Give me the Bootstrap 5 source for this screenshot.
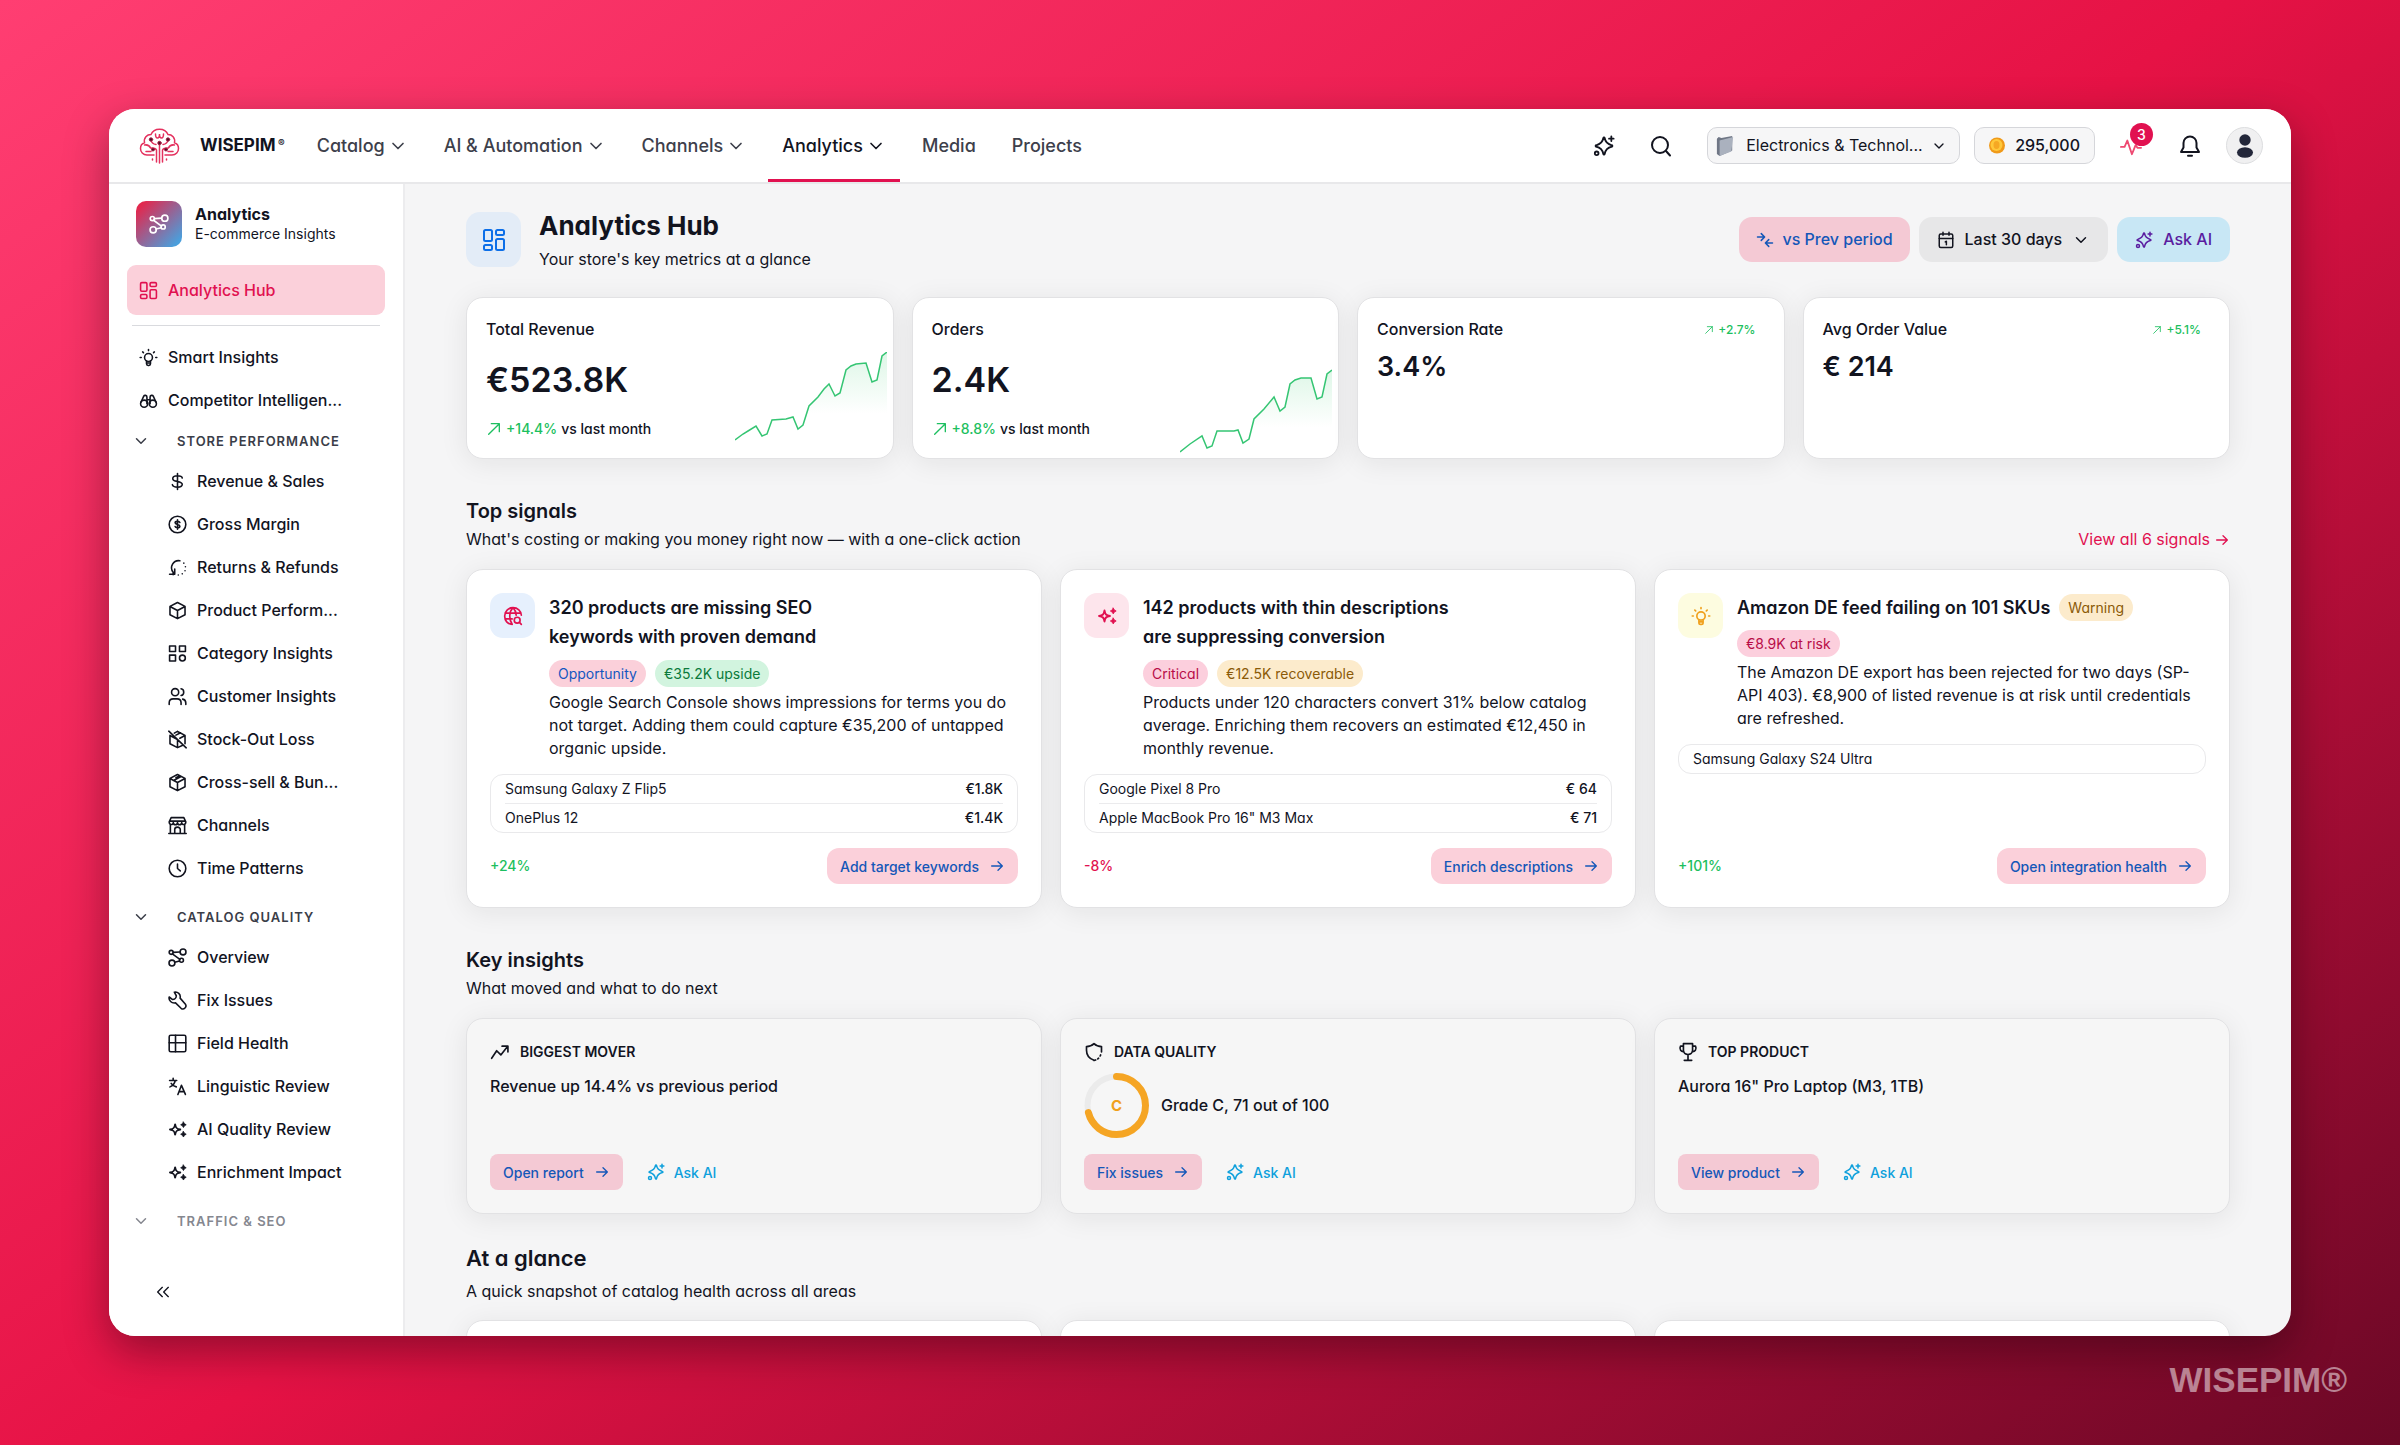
<!DOCTYPE html>
<html lang="en">
<head>
<meta charset="utf-8">
<meta name="viewport" content="width=device-width, initial-scale=1">
<title>WISEPIM Analytics Hub</title>
<link href="https://cdn.jsdelivr.net/npm/bootstrap@5.3.0/dist/css/bootstrap.min.css" rel="stylesheet">
<style>
:root{--ink:#12141f;--pink:#e11150;--blush:#fbd0da;--blue:#1457b8;--green:#1dbf60;--line:#e8e8ea}
body{font-family:Inter,"Noto Sans",sans-serif;font-feature-settings:"cv11";font-size:16px;line-height:23px;color:var(--ink);
 background:linear-gradient(145deg,#ff3e72 0%,#e61245 50%,#6b0826 100%);min-height:100vh}
a{text-decoration:none}
button{font-family:inherit}
h1,h2,h3,h4,p,ul{margin:0}
svg.ico{fill:none;stroke:currentColor;stroke-width:2;stroke-linecap:round;stroke-linejoin:round;flex:none;width:18px;height:18px}
svg.s10{width:10px;height:10px}
svg.s16{width:16px;height:16px}
svg.s20{width:20px;height:20px}
svg.s22{width:22px;height:22px}
svg.s24{width:24px;height:24px}
.stage{padding:109px 109px 0}
.shell{height:calc(100vh - 218px);min-height:600px;background:#f5f5f6;border-radius:26px;overflow:hidden;box-shadow:0 16px 44px rgba(30,0,12,.42)}
.topbar{height:75px;background:#fff;border-bottom:2px solid var(--line);padding:0 28px 0 30px;flex:none}
.brandname{font-weight:700;font-size:17px}
.brandname sup{font-size:10px;top:-4px;font-weight:600}
.mainnav{gap:8px;align-self:stretch;margin-left:18px}
.mainnav a{color:#3d404b;font-size:18px;font-weight:500;padding:0 14px;display:flex;align-items:center;gap:3px;border-bottom:3px solid transparent;border-top:3px solid transparent}
.mainnav a.on{color:var(--ink);border-bottom-color:var(--pink)}
.quick{gap:34px;margin-right:34px}
.iconbtn{background:none;border:0;padding:0;color:var(--ink);display:flex}
.pill{height:37px;border:1px solid #d5d6da;border-radius:10px;background:#f6f6f7;display:flex;align-items:center;gap:8px;padding:0 8px;margin-right:14px}
.pill select{appearance:none;border:0;background:none;color:var(--ink);font:inherit;font-size:16px;padding:0;outline:0}
.credits{padding:0 14px;gap:10px;font-weight:500;margin-right:25px}
.pulse{color:#ee4a72;margin-right:36px}
.alerts{margin-right:24px}
.count{position:absolute;top:-23px;left:10px;width:23px;height:23px;border-radius:50%;background:var(--pink);color:#fff;font-size:14px;font-weight:500;text-align:center}
.avatar{width:37px;height:37px;border-radius:50%;background:#f0f0f1;border:1px solid #dddee0}
.side{width:296px;flex:none;background:#fff;border-right:2px solid #ececee;padding:17px 18px 20px}
.sidehead{padding:0 9px;gap:13px;margin-bottom:18px}
.appicon{width:46px;height:46px;border-radius:10px;background:linear-gradient(135deg,#e2284e 10%,#4a9fdc 90%);color:#fff;flex:none}
.sidehead h2{font-size:16px;line-height:20px;font-weight:700}
.sidehead p{font-size:14px;line-height:20px}
.side a{display:flex;align-items:center;height:43px;gap:10px;padding-left:12px;color:var(--ink);font-weight:500}
.side a .ico{width:19px;height:19px}
.side a.on{height:50px;background:var(--blush);color:var(--pink);border-radius:9px}
.side hr{margin:10px 5px;color:#c9cbd0;opacity:.7}
.side ul{list-style:none;padding:0 0 0 29px}
.grp{height:38px;padding:0 0 0 5px;border:0;background:none;display:flex;align-items:center;gap:27px;width:100%;color:#3a3d48;font-size:13px;font-weight:600;letter-spacing:1px}
.grp.next{margin-top:8px}
.grp.dim{color:#85878f}
.page{padding:24px 61px 0;flex:1;min-width:0;overflow:hidden}
.hubicon{width:55px;height:55px;border-radius:14px;background:#e3ecf7;color:#0d6fe8}
.hubtitle{margin-left:18px}
.page h1{font-size:26px;line-height:36px;font-weight:700}
.tool{height:45px;border:0;border-radius:13px;display:flex;align-items:center;gap:10px;padding:0 18px;font-weight:500;font-size:16px}
.t-pink{background:#f4c9d4;color:var(--blue);padding:0 17px;gap:9px}
.t-gray{background:#e7e7e8;color:var(--ink)}
.t-sky{background:#c8e7f5;color:#5a1da0}
.kpis{display:grid;grid-template-columns:repeat(4,1fr);gap:18px;margin-top:26px}
.tri{display:grid;grid-template-columns:repeat(3,1fr);gap:18px}
.panel{background:#fff;border:1px solid #e2e2e4;border-radius:17px;box-shadow:0 4px 28px rgba(20,20,30,.08)}
.kpi{height:162px;padding-left:19px}
.kpi h3{font-size:16px;line-height:23px;font-weight:500}
.big{font-size:34px;line-height:42px;font-weight:600;margin:18px 0}
.mid{font-size:27px;line-height:36px;font-weight:600}
.delta{font-size:14px;line-height:20px;font-weight:500}
.tiny{font-size:12px;line-height:20px;font-weight:500;margin-right:28px}
.green{color:var(--green)}
.red{color:var(--pink)}
.spark{width:152px;height:101px;margin:0 6px 5px 0;flex:none;align-self:flex-end}
.sect{margin:39px 0 18px}
.sect h2{font-size:20px;line-height:26px;font-weight:600;margin-bottom:4px}
.signal{padding:23px;display:flex;flex-direction:column;min-height:339px}
.lead-in{gap:14px}
.tile{width:45px;height:45px;border-radius:13px;flex:none;display:flex;align-items:center;justify-content:center}
.tile-seo{background:#e6f0fd;color:var(--pink)}
.tile-ai{background:#fde5ec;color:var(--pink)}
.tile-warn{background:#fdfce0;color:#f0a01c}
.signal h3{font-size:18px;line-height:29px;font-weight:600}
.tags{gap:9px}
.tag{font-size:14px;line-height:27px;border-radius:14px;padding:0 9px}
.g-blue{background:#fbd0da;color:#1457c0}.g-green{background:#d2f4df;color:#0b7a3b}.g-crit{background:#fccfdd;color:#b80d48}.g-amber{background:#fcebcc;color:#8a5a08}
.items{list-style:none;border:1px solid #e9e9eb;border-radius:13px;padding:0 14px;margin-top:14px;font-size:14px}
.items li{display:flex;justify-content:space-between;line-height:28px}
.items li+li{border-top:1px solid #ebebed}
.items b{font-weight:500}
.act{height:36px;border:0;border-radius:12px;background:var(--blush);color:var(--blue);font-size:14px;font-weight:500;display:flex;align-items:center;gap:10px;padding:0 13px}
.act.sq{border-radius:8px;background:#f4c9d4}
.insight{background:#f6f6f6;padding:23px;height:196px;display:flex;flex-direction:column}
.insight p,.grade{font-weight:500}
.insight p{padding-top:13px}
.cap{font-size:14px;line-height:20px;font-weight:600;gap:10px}
.grade{gap:12px;margin-top:11px}
.ask{border:0;background:none;color:#0ea0dc;font-size:14px;font-weight:500;display:flex;align-items:center;gap:9px;padding:0}
.glance{margin:29px 0 17px}
.glance h2{font-size:22px;line-height:30px;font-weight:600;margin-bottom:7px}
.mark-foot{font-family:"Liberation Sans",sans-serif;font-weight:700;font-size:35px;line-height:40px;color:rgba(255,255,255,.5);padding:24px 53px 0 0;text-align:right}
</style>
<script src="https://cdn.jsdelivr.net/npm/bootstrap@5.3.0/dist/js/bootstrap.bundle.min.js"></script>
</head>
<body>
<svg width="0" height="0" class="d-none" aria-hidden="true">
<symbol id="chev" viewBox="0 0 24 24"><path d="M6 9l6 6 6-6"/></symbol>
<symbol id="dash" viewBox="0 0 24 24"><rect x="2" y="2" width="8" height="11" rx="1.5"/><rect x="2" y="17" width="8" height="5" rx="1.5"/><rect x="14" y="2" width="8" height="5" rx="1.5"/><rect x="14" y="11" width="8" height="11" rx="1.5"/></symbol>
<symbol id="spark" viewBox="0 0 24 24"><path d="M12 2.500c.4 0 .6.300.7.800.8 4.400 2.600 6.600 7.800 7.900.9.200.9 1.400 0 1.600-5.200 1.300-7 3.500-7.800 7.900-.2 1-1.200 1-1.400 0-.8-4.400-2.600-6.600-7.800-7.900-.9-.2-.9-1.400 0-1.600 5.200-1.300 7-3.500 7.800-7.900.1-.5.300-.8.700-.8z"/><path d="M20 1.500v5M17.500 4h5"/><circle cx="4" cy="20" r="2"/></symbol>
<symbol id="stars" viewBox="0 0 24 24"><path d="M9 5.500c.7 4.500 2 5.800 6.500 6.500-4.500.7-5.800 2-6.500 6.500-.7-4.500-2-5.800-6.500-6.500 4.500-.7 5.800-2 6.500-6.500z" stroke-width="2.400"/><path d="M19.500 2.500l1.300 2.200L23 6l-2.200 1.300-1.300 2.200-1.300-2.200L16 6l2.200-1.300zM19.500 14.500l1.300 2.200L23 18l-2.200 1.300-1.300 2.200-1.300-2.200L16 18l2.200-1.300z" fill="currentColor" stroke-width="1"/></symbol>
<symbol id="search" viewBox="0 0 24 24"><circle cx="11" cy="11" r="8"/><path d="M17 17l4 4.500"/></symbol>
<symbol id="bell" viewBox="0 0 24 24"><path d="M12 2.500a6.500 6.500 0 0 0-6.500 6.500v4.500L3 18h18l-2.500-4.500V9A6.500 6.500 0 0 0 12 2.500zM10 21.800h4"/></symbol>
<symbol id="bulb" viewBox="0 0 24 24"><circle cx="12" cy="12" r="5"/><path d="M9.500 16.500v3.500a2 2 0 0 0 2 2h1a2 2 0 0 0 2-2v-3.500M9.800 19h4.400M12 2v1.300M1.500 12h1.300M21.200 12h1.300M4.600 5l1 .9M19.400 5l-1 .9"/></symbol>
<symbol id="bino" viewBox="0 0 24 24"><circle cx="6.500" cy="16" r="4.500"/><circle cx="17.500" cy="16" r="4.500"/><path d="M2.300 14.500L6 6.500c.8-1.600 4-1.300 4 1V16M21.700 14.500L18 6.500c-.8-1.600-4-1.300-4 1V16M10 11h4"/></symbol>
<symbol id="dollar" viewBox="0 0 24 24"><path d="M12 2v20M18 7.500C17.500 5.500 15 4.800 12 4.800c-3.500 0-6 1.200-6 3.600 0 5 12 2 12 7.200 0 2.400-2.500 3.600-6 3.600s-6-1-6.500-3.200"/></symbol>
<symbol id="coinc" viewBox="0 0 24 24"><circle cx="12" cy="12" r="10.500"/><path d="M12 6v12M15 9.500c-.4-1-1.500-1.500-3-1.500-1.800 0-3 .7-3 1.900 0 2.700 6 1.500 6 4.200 0 1.200-1.200 1.900-3 1.900-1.600 0-2.700-.5-3-1.500"/></symbol>
<symbol id="ret" viewBox="0 0 24 24"><path d="M15 3.500A9 9 0 0 0 6.500 18v3M2 20.500h6.500V14"/><path d="M20 6.500v.01M22 11v.01M21.500 16v.01M18 20v.01M13 21.500v.01"/></symbol>
<symbol id="box" viewBox="0 0 24 24"><path d="M12 1.800l9.500 5v10.500L12 22.300l-9.500-5V6.800zM2.500 7l9.500 5 9.500-5M12 12v10"/></symbol>
<symbol id="box2" viewBox="0 0 24 24"><path d="M12 1.800l9.500 5v10.500L12 22.300l-9.500-5V6.800zM2.500 7l9.500 5 9.500-5M12 12v10M7 9.500l9.500-5M10 6l5-2.500"/></symbol>
<symbol id="boxoff" viewBox="0 0 24 24"><path d="M12 1.800l9.500 5v10.500M18 19.500l-6 2.800-9.500-5V6.800M8 4l4-2.200M15 10.500L21.500 7M12 12v10M10 6.500l6-3M1 1.500l22 21M2.500 7l9.500 5"/></symbol>
<symbol id="cats" viewBox="0 0 24 24"><rect x="2" y="2.500" width="7.500" height="7"/><rect x="14.500" y="2.500" width="7.500" height="7"/><rect x="2" y="14" width="7.500" height="7.500"/><circle cx="18.200" cy="17.800" r="3.700"/></symbol>
<symbol id="users" viewBox="0 0 24 24"><circle cx="9" cy="6.500" r="4.500"/><path d="M1.500 22v-2c0-3 2-5 5-5h5c3 0 5 2 5 5v2M16.500 2.300c4.500.7 4.500 7.700 0 8.400M18.500 15.300c2.600.6 4 2.300 4 5V22"/></symbol>
<symbol id="shop" viewBox="0 0 24 24"><path d="M1 22h22M3 11v11M21 11v11M4 2h16l2.500 5.500c0 4-5 4.500-5.200.8-.3 3.700-5 3.700-5.300 0-.3 3.700-5 3.700-5.300 0C6.500 12 1.500 11.500 1.500 7.500zM2 6.500h20M8.500 22v-5a3.500 3 0 0 1 7 0v5"/></symbol>
<symbol id="clock" viewBox="0 0 24 24"><circle cx="12" cy="12" r="10.500"/><path d="M12 6.500V12l3.500 3"/></symbol>
<symbol id="nodes" viewBox="0 0 24 24"><circle cx="4" cy="5.500" r="2.500"/><circle cx="19" cy="5" r="3.700"/><circle cx="17" cy="15.500" r="2.500"/><circle cx="5" cy="19" r="3.700"/><path d="M6.500 5.500L15 5M5.500 7.500l9.500 7M8.500 18l6-1.500"/></symbol>
<symbol id="wrench" viewBox="0 0 24 24"><path d="M8 1.500c4-1 8.500 2.500 7.300 7.500l6.500 7.500c2.700 3.500-1.800 8-5.300 5.300L9.500 15C4.500 16 .5 12 1.500 7.500l4.300 3.300c2.500 0 4.700-2 4.700-4.800z"/></symbol>
<symbol id="table" viewBox="0 0 24 24"><rect x="1.500" y="1.500" width="21" height="21" rx="2"/><path d="M1.500 11h21M9.500 1.500v21"/></symbol>
<symbol id="lang" viewBox="0 0 24 24"><path d="M2 4.500h9M6.500 1.500v3M9 5c-1 4-3 6-6.500 7.500M4 8c1.500 2.500 4 4 6.500 4.500M12.500 22l4.500-11.500L22 22M14 18.500h6.500"/></symbol>
<symbol id="dbl" viewBox="0 0 24 24"><path d="M11 5l-7 7 7 7M20 5l-7 7 7 7"/></symbol>
<symbol id="cmp" viewBox="0 0 24 24"><path d="M2 8h9M7 3.500l4.500 4.500L7 12.500M22 16h-9M17 11.500L12.500 16l4.500 4.500"/></symbol>
<symbol id="cal" viewBox="0 0 24 24"><rect x="3" y="4" width="18" height="18" rx="2"/><path d="M8 1.500v4M16 1.500v4M3 10h18M11 14.500l1.500-.8v4.500"/></symbol>
<symbol id="ne" viewBox="0 0 24 24"><path d="M4 20L20 4M8 4h12v12"/></symbol>
<symbol id="arr" viewBox="0 0 24 24"><path d="M4 12h16M13.500 5.500L20 12l-6.500 6.500"/></symbol>
<symbol id="globe" viewBox="0 0 24 24"><path d="M11 22C5.500 22 2 17.500 2 12S6.500 2 12 2s9.800 4 10 9M2.500 8.500h19M2.500 15.500H11M12 2c-5 5-5 14-1 20M12 2c2.500 2.500 3.600 5.500 3.800 9"/><circle cx="17" cy="17" r="3.500"/><path d="M19.700 19.700L22 22"/></symbol>
<symbol id="trend" viewBox="0 0 24 24"><path d="M2 19.500l6-9 5 5 8-10M14.500 5H21.500v7"/></symbol>
<symbol id="shield" viewBox="0 0 24 24"><path d="M12 22c-6-2-9-6-9-12V5.500c4 0 6.500-1 9-3.500 2.500 2.500 5 3.500 9 3.500V12M20 15.500l-.6 1.300M17.500 19.500l-1 .8M14 21.500l-2 .7"/></symbol>
<symbol id="cup" viewBox="0 0 24 24"><path d="M6.500 2h11v8c0 3-2.500 5-5.500 5s-5.500-2-5.500-5zM6.500 5H3c-2 4 1 7 4 6.500M17.500 5H21c2 4-1 7-4 6.500M12 15v6.500M7.500 22h9"/></symbol>
<symbol id="beat" viewBox="0 0 24 24"><path d="M1 13h4l3-7 5 15 4-10 2 3h4"/></symbol>
</svg>

<div class="stage">
<div class="shell d-flex flex-column">
<header class="topbar d-flex align-items-center">
  <svg width="41" height="36" viewBox="0 0 41 36" fill="none" stroke="#e4305e" stroke-width="1.500" stroke-linecap="round"><path d="M15 27H8c-4 0-6.500-3-6.500-6.500 0-3 1.700-5 4-5.700C4.500 9.500 8 6.500 12 6.500 13.500 3 17 1.300 20.500 1.300S27.500 3 29 6.500c4 0 7.500 3 6.500 8.300 2.300.7 4 2.700 4 5.700 0 3.500-2.500 6.500-6.500 6.500h-7"/><path d="M16.500 6c0 2 .3 4 2 4s2-2 2-4c0 2 .5 4 2 4s2-2 2-4"/><path d="M20.500 35V15M17.500 34V22c-1-2-3-2-5-2M23.500 34V22c1-2 3-2 5-2M12 12c.5 3 2 4 5 4.500M29 12c-.5 3-2 4-5 4.500M5.500 17c3-.5 5 .5 6 3M35.500 17c-3-.5-5 .5-6 3M7 23.500h5M34 23.500h-5M13.500 31v1M27.500 31v1"/><g fill="#4a1226" stroke="#a51a42" stroke-width="1"><circle cx="12" cy="11.500" r="1.700"/><circle cx="29" cy="11.500" r="1.700"/><circle cx="20.500" cy="15" r="1.700"/><circle cx="14" cy="21.500" r="1.500"/><circle cx="27" cy="21.500" r="1.500"/></g></svg>
  <a href="#" class="brandname text-reset ms-3 ps-1">WISEPIM<sup> ®</sup></a>
  <nav class="mainnav d-flex">
    <a href="#">Catalog <svg class="ico s20"><use href="#chev"/></svg></a>
    <a href="#">AI &amp; Automation <svg class="ico s20"><use href="#chev"/></svg></a>
    <a href="#">Channels <svg class="ico s20"><use href="#chev"/></svg></a>
    <a href="#" class="on">Analytics <svg class="ico s20"><use href="#chev"/></svg></a>
    <a href="#">Media</a>
    <a href="#">Projects</a>
  </nav>
  <div class="d-flex align-items-center ms-auto">
    <div class="quick d-flex align-items-center">
      <button class="iconbtn" aria-label="Assistant"><svg class="ico s22"><use href="#spark"/></svg></button>
      <button class="iconbtn" aria-label="Search"><svg class="ico s24"><use href="#search"/></svg></button>
    </div>
    <label class="pill">
      <svg width="18" height="22" viewBox="0 0 20 24" class="me-1"><path d="M1 4l2-2 3 1 12-2v16L4 23l-3-2z" fill="#6f7685"/><path d="M4 6l15-4-2 16L4 23z" fill="#aab1be"/></svg>
      <select aria-label="Workspace"><option>Electronics &amp; Technol...</option></select>
      <svg class="ico s16 me-1"><use href="#chev"/></svg>
    </label>
    <div class="pill credits">
      <svg width="16" height="17" viewBox="0 0 16 17"><circle cx="8" cy="8.500" r="8" fill="#f09a1a"/><circle cx="7.500" cy="8" r="6" fill="#ffc83a"/><ellipse cx="7.500" cy="8" rx="3" ry="4" fill="#f6a823"/></svg>
      <span>295,000</span>
    </div>
    <button class="iconbtn pulse position-relative" aria-label="Activity"><svg class="ico s22"><use href="#beat"/></svg><span class="position-absolute start-0 top-50"><span class="count">3</span></span></button>
    <button class="iconbtn alerts" aria-label="Notifications"><svg class="ico s24"><use href="#bell"/></svg></button>
    <button class="avatar iconbtn justify-content-center align-items-center" aria-label="Account"><svg width="18" height="24" viewBox="0 0 18 24" fill="#23273a"><circle cx="9" cy="6" r="5.700"/><ellipse cx="9" cy="18.500" rx="8" ry="5.300"/></svg></button>
  </div>
</header>
<div class="d-flex flex-grow-1 overflow-hidden">
<aside class="side d-flex flex-column">
  <div class="sidehead d-flex align-items-center">
    <div class="appicon d-flex align-items-center justify-content-center"><svg class="ico s20"><use href="#nodes"/></svg></div>
    <div><h2>Analytics</h2><p>E-commerce Insights</p></div>
  </div>
  <a href="#" class="on"><svg class="ico"><use href="#dash"/></svg>Analytics Hub</a>
  <hr>
  <a href="#"><svg class="ico"><use href="#bulb"/></svg>Smart Insights</a>
  <a href="#"><svg class="ico"><use href="#bino"/></svg>Competitor Intelligen...</a>
  <button class="grp"><svg class="ico"><use href="#chev"/></svg>STORE PERFORMANCE</button>
  <ul>
    <li><a href="#"><svg class="ico"><use href="#dollar"/></svg>Revenue &amp; Sales</a></li>
    <li><a href="#"><svg class="ico"><use href="#coinc"/></svg>Gross Margin</a></li>
    <li><a href="#"><svg class="ico"><use href="#ret"/></svg>Returns &amp; Refunds</a></li>
    <li><a href="#"><svg class="ico"><use href="#box"/></svg>Product Perform...</a></li>
    <li><a href="#"><svg class="ico"><use href="#cats"/></svg>Category Insights</a></li>
    <li><a href="#"><svg class="ico"><use href="#users"/></svg>Customer Insights</a></li>
    <li><a href="#"><svg class="ico"><use href="#boxoff"/></svg>Stock-Out Loss</a></li>
    <li><a href="#"><svg class="ico"><use href="#box2"/></svg>Cross-sell &amp; Bun...</a></li>
    <li><a href="#"><svg class="ico"><use href="#shop"/></svg>Channels</a></li>
    <li><a href="#"><svg class="ico"><use href="#clock"/></svg>Time Patterns</a></li>
  </ul>
  <button class="grp next"><svg class="ico"><use href="#chev"/></svg>CATALOG QUALITY</button>
  <ul>
    <li><a href="#"><svg class="ico"><use href="#nodes"/></svg>Overview</a></li>
    <li><a href="#"><svg class="ico"><use href="#wrench"/></svg>Fix Issues</a></li>
    <li><a href="#"><svg class="ico"><use href="#table"/></svg>Field Health</a></li>
    <li><a href="#"><svg class="ico"><use href="#lang"/></svg>Linguistic Review</a></li>
    <li><a href="#"><svg class="ico"><use href="#stars"/></svg>AI Quality Review</a></li>
    <li><a href="#"><svg class="ico"><use href="#stars"/></svg>Enrichment Impact</a></li>
  </ul>
  <button class="grp next dim"><svg class="ico"><use href="#chev"/></svg>TRAFFIC &amp; SEO</button>
  <button class="iconbtn mt-auto ms-4 mb-3 ps-1" aria-label="Collapse sidebar"><svg class="ico s16"><use href="#dbl"/></svg></button>
</aside>

<main class="page">
  <div class="d-flex align-items-center">
    <div class="hubicon d-flex align-items-center justify-content-center"><svg class="ico s24"><use href="#dash"/></svg></div>
    <div class="hubtitle"><h1>Analytics Hub</h1><p class="pt-1">Your store's key metrics at a glance</p></div>
    <div class="tags d-flex ms-auto">
      <button class="tool t-pink"><svg class="ico"><use href="#cmp"/></svg>vs Prev period</button>
      <button class="tool t-gray"><svg class="ico"><use href="#cal"/></svg>Last 30 days <svg class="ico"><use href="#chev"/></svg></button>
      <button class="tool t-sky"><svg class="ico"><use href="#spark"/></svg>Ask AI</button>
    </div>
  </div>

  <section class="kpis">
    <div class="panel kpi d-flex">
      <div class="flex-grow-1 pt-3 mt-1">
        <h3>Total Revenue</h3>
        <div class="big">€523.8K</div>
        <div class="delta d-flex align-items-center"><svg class="ico green s16 me-1"><use href="#ne"/></svg><span class="green me-1">+14.4%</span>vs last month</div>
      </div>
      <svg class="spark" viewBox="0 0 152 101"><defs><linearGradient id="gr" x1="0" y1="0" x2="0" y2="1"><stop offset="0" stop-color="#22c55e" stop-opacity=".15"/><stop offset=".7" stop-color="#22c55e" stop-opacity="0"/></linearGradient></defs><path fill="url(#gr)" d="M0 88L8 82 13 79 21 74 27 84 32 82 37 68 51 67 58 65 63 77 68 73 74 54 83 45 89 37 94 32 100 44 105 41 111 18 116 14 121 12 131 11 137 30 142 28 147 4 152 0V88z"/><path fill="none" stroke="#35c573" stroke-width="1.500" d="M0 88L8 82 13 79 21 74 27 84 32 82 37 68 51 67 58 65 63 77 68 73 74 54 83 45 89 37 94 32 100 44 105 41 111 18 116 14 121 12 131 11 137 30 142 28 147 4 152 0"/></svg>
    </div>
    <div class="panel kpi d-flex">
      <div class="flex-grow-1 pt-3 mt-1">
        <h3>Orders</h3>
        <div class="big">2.4K</div>
        <div class="delta d-flex align-items-center"><svg class="ico green s16 me-1"><use href="#ne"/></svg><span class="green me-1">+8.8%</span>vs last month</div>
      </div>
      <svg class="spark" viewBox="0 -18 152 101"><path fill="url(#gr)" d="M0 82L10 74 22 66 27 78 32 76 37 61 54 61 58 60 63 73 69 69 74 49 84 39 94 27 100 41 105 37 110 14 115 10 121 8 131 8 137 29 142 27 147 4 152 0V82z"/><path fill="none" stroke="#35c573" stroke-width="1.500" d="M0 82L10 74 22 66 27 78 32 76 37 61 54 61 58 60 63 73 69 69 74 49 84 39 94 27 100 41 105 37 110 14 115 10 121 8 131 8 137 29 142 27 147 4 152 0"/></svg>
    </div>
    <div class="panel kpi pt-3">
      <div class="d-flex justify-content-between align-items-center pt-1"><h3>Conversion Rate</h3><span class="tiny green d-flex align-items-center gap-1"><svg class="ico s10"><use href="#ne"/></svg>+2.7%</span></div>
      <div class="mid pt-2">3.4%</div>
    </div>
    <div class="panel kpi pt-3">
      <div class="d-flex justify-content-between align-items-center pt-1"><h3>Avg Order Value</h3><span class="tiny green d-flex align-items-center gap-1"><svg class="ico s10"><use href="#ne"/></svg>+5.1%</span></div>
      <div class="mid pt-2">€ 214</div>
    </div>
  </section>

  <div class="sect d-flex justify-content-between align-items-end">
    <div><h2>Top signals</h2><p>What's costing or making you money right now — with a one-click action</p></div>
    <a href="#" class="red d-flex align-items-center gap-1">View all 6 signals <svg class="ico s16"><use href="#arr"/></svg></a>
  </div>
  <section class="tri">
    <article class="panel signal">
      <div class="d-flex lead-in">
        <div class="tile tile-seo"><svg class="ico s20"><use href="#globe"/></svg></div>
        <div class="flex-grow-1">
          <div class="d-flex flex-wrap align-items-center tags"><h3 class="w-100">320 products are missing SEO<br>keywords with proven demand</h3><span class="tag g-blue">Opportunity</span><span class="tag g-green">€35.2K upside</span></div>
          <p class="pt-1">Google Search Console shows impressions for terms you do not target. Adding them could capture €35,200 of untapped organic upside.</p>
        </div>
      </div>
      <ul class="items"><li><span>Samsung Galaxy Z Flip5</span><b>€1.8K</b></li><li><span>OnePlus 12</span><b>€1.4K</b></li></ul>
      <div class="d-flex justify-content-between align-items-center mt-auto"><span class="delta green">+24%</span><button class="act">Add target keywords <svg class="ico s16"><use href="#arr"/></svg></button></div>
    </article>
    <article class="panel signal">
      <div class="d-flex lead-in">
        <div class="tile tile-ai"><svg class="ico s20"><use href="#stars"/></svg></div>
        <div class="flex-grow-1">
          <div class="d-flex flex-wrap align-items-center tags"><h3 class="w-100">142 products with thin descriptions<br>are suppressing conversion</h3><span class="tag g-crit">Critical</span><span class="tag g-amber">€12.5K recoverable</span></div>
          <p class="pt-1">Products under 120 characters convert 31% below catalog average. Enriching them recovers an estimated €12,450 in monthly revenue.</p>
        </div>
      </div>
      <ul class="items"><li><span>Google Pixel 8 Pro</span><b>€ 64</b></li><li><span>Apple MacBook Pro 16" M3 Max</span><b>€ 71</b></li></ul>
      <div class="d-flex justify-content-between align-items-center mt-auto"><span class="delta red">-8%</span><button class="act">Enrich descriptions <svg class="ico s16"><use href="#arr"/></svg></button></div>
    </article>
    <article class="panel signal">
      <div class="d-flex lead-in">
        <div class="tile tile-warn"><svg class="ico s20"><use href="#bulb"/></svg></div>
        <div class="flex-grow-1">
          <div class="d-flex flex-wrap align-items-center tags"><h3>Amazon DE feed failing on 101 SKUs</h3><span class="tag g-amber">Warning</span></div>
          <div class="d-flex tags pt-2"><span class="tag g-crit">€8.9K at risk</span></div>
          <p class="pt-1">The Amazon DE export has been rejected for two days (SP-API 403). €8,900 of listed revenue is at risk until credentials are refreshed.</p>
        </div>
      </div>
      <ul class="items"><li><span>Samsung Galaxy S24 Ultra</span></li></ul>
      <div class="d-flex justify-content-between align-items-center mt-auto"><span class="delta green">+101%</span><button class="act">Open integration health <svg class="ico s16"><use href="#arr"/></svg></button></div>
    </article>
  </section>

  <div class="sect"><h2>Key insights</h2><p>What moved and what to do next</p></div>
  <section class="tri">
    <article class="panel insight">
      <div class="cap d-flex align-items-center"><svg class="ico s20"><use href="#trend"/></svg>BIGGEST MOVER</div>
      <p>Revenue up 14.4% vs previous period</p>
      <div class="d-flex mt-auto gap-4"><button class="act sq">Open report <svg class="ico s16"><use href="#arr"/></svg></button><button class="ask"><svg class="ico"><use href="#spark"/></svg>Ask AI</button></div>
    </article>
    <article class="panel insight">
      <div class="cap d-flex align-items-center"><svg class="ico s20"><use href="#shield"/></svg>DATA QUALITY</div>
      <div class="grade d-flex align-items-center"><svg width="65" height="65" viewBox="0 0 65 65"><circle cx="32.500" cy="32.500" r="29" fill="none" stroke="#ebebeb" stroke-width="6"/><circle cx="32.500" cy="32.500" r="29" fill="none" stroke="#f5a524" stroke-width="7" stroke-linecap="round" pathLength="100" stroke-dasharray="71 29" transform="rotate(-90 32.500 32.500)"/><text x="32.500" y="38" text-anchor="middle" font-size="15" font-weight="700" fill="#f0a01c">C</text></svg><span>Grade C, 71 out of 100</span></div>
      <div class="d-flex mt-auto gap-4"><button class="act sq">Fix issues <svg class="ico s16"><use href="#arr"/></svg></button><button class="ask"><svg class="ico"><use href="#spark"/></svg>Ask AI</button></div>
    </article>
    <article class="panel insight">
      <div class="cap d-flex align-items-center"><svg class="ico s20"><use href="#cup"/></svg>TOP PRODUCT</div>
      <p>Aurora 16" Pro Laptop (M3, 1TB)</p>
      <div class="d-flex mt-auto gap-4"><button class="act sq">View product <svg class="ico s16"><use href="#arr"/></svg></button><button class="ask"><svg class="ico"><use href="#spark"/></svg>Ask AI</button></div>
    </article>
  </section>

  <div class="glance"><h2>At a glance</h2><p>A quick snapshot of catalog health across all areas</p></div>
  <section class="tri"><div class="panel py-5"></div><div class="panel py-5"></div><div class="panel py-5"></div></section>
</main>
</div>
</div>
</div>
<footer class="mark-foot">WISEPIM®</footer>
</body>
</html>
